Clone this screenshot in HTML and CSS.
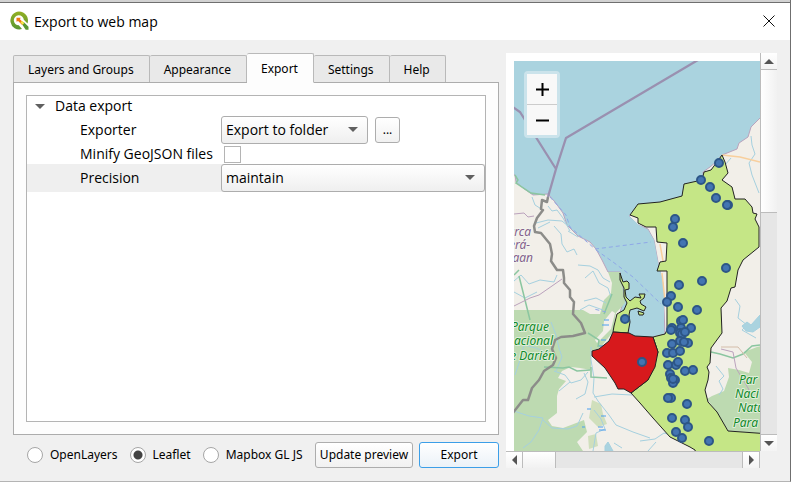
FILE: index.html
```html
<!DOCTYPE html>
<html lang="en">
<head>
<meta charset="utf-8">
<title>Export to web map</title>
<meta name="viewport" content="width=device-width, initial-scale=1">
<link rel="stylesheet" href="styles.css">
</head>
<body>
<div class="window">
  <header class="titlebar">
    <svg class="logo" viewBox="0 0 20 20" aria-hidden="true">
      <defs><linearGradient id="q" x1="0" y1="0" x2="0" y2="1"><stop offset="0" stop-color="#93b023"/><stop offset="1" stop-color="#589632"/></linearGradient></defs>
      <path d="M10 0.500a9 9 0 1 0 3 17.600l-3.200-3.800a5 5 0 1 1 5-5.500l3.700 3.600A9 9 0 0 0 10 .5z" fill="url(#q)"/>
      <path d="M11.500 11h3.200l4.800 4.800v3h-2.800z" fill="#589632"/>
      <path d="M7.500 6.800h4.200l-.8 1.400 4 3.900-1.800 1.800-4-4-1.600.9z" fill="#ee7913"/>
      <path d="M11.400 11.400l1.700-1.700 2.200 2.200-1.600 1.800z" fill="#f0e64a"/>
    </svg>
    <h1>Export to web map</h1>
    <button class="close" type="button" aria-label="Close"><svg viewBox="0 0 12 12"><path d="M.5 .5l11 11M11.500 .5l-11 11" stroke="#111" fill="none"/></svg></button>
  </header>
  <main class="body">
    <section class="options">
      <div class="tabs" role="tablist">
        <button type="button" role="tab">Layers and Groups</button>
        <button type="button" role="tab">Appearance</button>
        <button type="button" role="tab" class="active" aria-selected="true">Export</button>
        <button type="button" role="tab">Settings</button>
        <button type="button" role="tab">Help</button>
      </div>
      <div class="pane">
        <div class="tree">
          <div class="row group"><span class="twisty"></span><span>Data export</span></div>
          <div class="row tall">
            <label for="exporter">Exporter</label>
            <span class="combo fit"><select id="exporter"><option>Export to folder</option></select></span>
            <button class="btn browse" type="button">...</button>
          </div>
          <div class="row">
            <label for="minify">Minify GeoJSON files</label>
            <input id="minify" class="check" type="checkbox">
          </div>
          <div class="row tall selected">
            <label for="precision">Precision</label>
            <span class="combo"><select id="precision"><option>maintain</option></select></span>
          </div>
        </div>
      </div>
      <div class="footer">
        <label><input type="radio" name="lib">OpenLayers</label>
        <label><input type="radio" name="lib" checked>Leaflet</label>
        <label><input type="radio" name="lib">Mapbox GL JS</label>
        <button class="btn update" type="button">Update preview</button>
        <button class="btn export" type="button">Export</button>
      </div>
    </section>
    <section class="preview">
      <div class="map">
        <svg class="mapart" viewBox="514 61 246 390" preserveAspectRatio="xMinYMin slice">
          <path fill="#aad3df" d="M0 0h900v600H0z"/>
          <g fill="#f2efe9" stroke="#b9a3bd">
            <path d="M510 174L515 175L516 182L523 188L533 195L548 194L555 202L563 213L567 225L578 236L590 242L596 249L602 260L608 272L620 272L624 300L614 330L635 338L665 334L663 285L658 262L654 240L648 229L638 225L629 216L640 208L684 198L704 181L703 172L710 167L717 161L722 155L737 149L739 143L748 137L751 127L760 118L770 115V460H510z" />
          </g>
          <path fill="#aad3df" d="M622 273L627 302L630 333L650 337L664 334V285L658 262L654 240L648 230L639 225L629 216L610 220L600 250z"/>
          <g fill="#bddab1">
            <path d="M510 310H583L590 314L600 314L604 300L611 293L612 283L608 272H620L625 303L616 313L613 332L600 348L591 351V370L580 368L571 367L562 371L558 378L566 381L559 389L557 396V413L548 420L552 426L563 428L571 425L584 420L587 432L577 442L583 451H510z"/>
            <path d="M592 400L601 404L603 414L607 424L598 427L589 418zM588 436L596 434L598 446L589 449z" fill="#d0dfbc"/>
            <path d="M770 344L757 347L744 352L752 362L749 373L739 370L728 368L729 377L724 391L712 396L707 399L717 413L728 431L770 434z"/>
          </g>
          <path d="M604 321l8-10 3 2-4 16-14 14-2-3 8-9z" fill="#f2efe9"/>
          <g class="rivers">
            <path d="M532 197l3 8 8 5M548 206l4 5 5-1 6 8 7 13M536 223l12-3 14 1 6 5M538 228l12-6M554 226l7 8 1 10 5 8 7-3 3 6M568 231l10 6M578 265l12 1 8 4 5 8 7 4M585 278l8-7 6 12 9 5 3 9M584 301l12-3 10 5M580 310l9-5 14 5M514 281l7-6 8 9 11-4 14 2 3-7M514 292l11 6 12-6M515 375l4-12 5-18 12 3 15 7M551 322l5 13 3 13 3 9-6 14"/>
            <path d="M591 347v13l3 18-1 15 5 8 11 14 7 10 17 7 17 6M594 397l18-3 20 1M554 371l11 4 6 8 10-3 7-8M559 391l11-9M584 373l4 9-3 12-9 5M514 411l15 5 14 2-4 12-8 12-8 6M543 420l9 8 16 1 9-3 6-13M594 410l7 9 4 10-9 4-3 18M614 443l8 5M640 441l15-2 9-6 10 3M648 451l8-9M719 395l4-6-4-8 5-5-8-10M751 136l1 9 3 9-6 9 3 12 7 18M731 158l-6 7M735 299l5 7-2 12 9 7-5 5 14 8"/>
            <path d="M742 326l5-4 4 3 9-10v12l-7 5-7-1z" fill="#aad3df"/>
            <path d="M605 446l3-4 5 9h-8z" fill="#aad3df"/>
          </g>
          <g fill="none" stroke="#4b9ef0"><path d="M604 320h5M602 325h7M601 340h5M599 346h7M587 409h4M601 416h5M598 427h5M582 427h3M599 430h7"/></g>
          <g fill="none" stroke="#8bc6a0" stroke-width="1.500">
            <path d="M515 175l3 5-2 3 15 10 14 2M519 276l11 44M514 275l5-5M544 367l19 1 6-1 8 4 13-1M604 314l8-20M591 367v10l16 1M588 333l11 7-1 7M711 352l9 2 13 4 10-4 9-8 8-1"/>
          </g>
          <g fill="none" stroke="#bba2bd">
            <path d="M514 214l10-1 4 4 6-1M562 279l-10 7-13 9-9 3-16 8M721 349l12 3 3 16 12 20 5 10"/>
            <path d="M721 347h17l9 11" stroke="#d4bda9"/>
          </g>
          <path d="M722 155l18 2 20 5M657 228l2 14M660 244l3 17M662 273l3 28" stroke="#f8cf9d" fill="none" stroke-width="1.500"/>
          <path d="M550 197l16 18 4 12 25 22 56-7M596 250l17 12 20 15 28 27M606 312l-12-3" stroke="#8fa8e8" stroke-dasharray="4 3" fill="none" stroke-width="1"/>
          <path d="M510 105L520 112L556 169M698 60L566 138L556 169L548 197" stroke="#9a90b0" fill="none" stroke-width="2.300"/>
          <path d="M548 197l-1 5-5-2-1 9 2 1-6 8-3 8 1 6 6 1 9 11 2 10-1 7 6 9 6 0 1 8 0 5 6 7 0 7 4 5-1 12 8 9 4 10-12 3-12 1-6 3-3 9 4 9-3 7-9 6-5 9-7 8-4 12h-5l-11 14" stroke="#8c8c89" fill="none" stroke-width="2.500" stroke-linejoin="round"/>
          <g class="area">
            <path class="lime" d="M722 155L725 162L728 173L722 180L732 187L735 199L745 199L752 207L753 213L757 214L755 219L759 227V247L743 260L738 270L735 287L731 288L727 301L721 308L722 333L711 348L710 363L707 367L709 372L708 380L705 390L708 402L717 412L728 431L770 434V460H698L695 450L690 447L670 437L653 418L640 403L631 393L648 380L658 352L653 337L665 334L667 330V271H657L660 262L666 261L667 243L657 242L656 227H646L638 223V218L630 215L638 204L660 202L682 196L684 184L702 180L704 172L711 170L717 162z"/>
            <path class="lime" d="M613 332L614 326L617 314L624 310L627 303L624 297V288L620 280V273L623 282L627 281L629 283L629 289L625 290L626 297L630 301L635 297L641 298L639 294L645 294L644 298L640 301L641 304L646 307L644 311L637 308L630 310L629 315L630 322L628 333z"/>
            <path class="lime" d="M638 311l6 2-1 2h-4z"/>
            <path class="red" d="M613 332L629 333L635 336L653 337L658 352L655 367L648 380L631 393L624 389L618 389L615 383L605 368L592 356V351L599 349L609 341z"/>
          </g>
          <g class="dots"></g>
          <g class="place admin" text-anchor="end"><text x="531" y="236">arca</text><text x="530" y="249">erá-</text><text x="533" y="262">aan</text></g>
          <g class="place park" text-anchor="end"><text x="549" y="331">Parque</text><text x="553" y="345">acional</text><text x="555" y="360">e Darién</text></g>
          <g class="place park"><text x="739" y="384">Par</text><text x="735" y="398">Naci</text><text x="738" y="412">Natu</text><text x="733" y="427">Para</text></g>
        </svg>
        <div class="zoom"><button type="button" aria-label="Zoom in"><svg viewBox="0 0 13 13"><path d="M6.500 0v13M0 6.500h13" stroke="#000" stroke-width="2"/></svg></button><button type="button" aria-label="Zoom out"><svg viewBox="0 0 13 13"><path d="M0 6.500h13" stroke="#000" stroke-width="2"/></svg></button></div>
      </div>
      <div class="vbar"><span class="step up"></span><span class="thumb"></span><span class="track"></span><span class="step down"></span></div>
      <div class="hbar"><span class="step left"></span><span class="thumb"></span><span class="track"></span><span class="step right"></span></div>
    </section>
  </main>
</div>
<script src="map.js"></script>
</body>
</html>
```
FILE: map.js
```js
const points = [
  [719,163],[701,180],[710,187],[716,198],[728,205],[727,205],[675,219],[673,227],[683,243],[726,268],
  [702,281],[679,285],[671,296],[667,302],[678,307],[697,310],[681,321],[683,320],[691,328],[672,328],
  [671,330],[681,328],[680,333],[682,334],[685,332],[672,344],[680,341],[688,343],[684,342],[667,353],
  [673,353],[680,351],[668,365],[676,365],[678,362],[685,371],[693,370],[670,374],[671,378],[675,380],
  [673,383],[673,379],[671,398],[668,398],[687,404],[672,418],[685,420],[688,427],[676,432],[682,438],
  [709,441],[642,362],[625,319]
];
const layer = document.querySelector('.dots');
for (const [x, y] of points) {
  const dot = document.createElementNS('http://www.w3.org/2000/svg', 'circle');
  dot.setAttribute('cx', x);
  dot.setAttribute('cy', y);
  dot.setAttribute('r', 4);
  layer.append(dot);
}
```
FILE: styles.css
```css
* { box-sizing: border-box; }
body {
  margin: 0;
  font: 12px/16px "Noto Sans", sans-serif;
  color: #000;
}
button, select, input { font: inherit; color: inherit; margin: 0; }
.window {
  display: flex;
  flex-direction: column;
  min-height: 100vh;
  background: #f0f0f0;
  border: solid #6f6f6f;
  border-width: 0 1px 0 0;
  border-bottom: 1px solid #b4b4b4;
}
.titlebar {
  display: flex;
  align-items: center;
  height: 40px;
  padding: 0 15px 0 9px;
  background: #fff;
  border-top: 2px solid #d2d2d2;
  box-shadow: inset 0 1px #6f6f6f;
}
.logo { width: 20px; height: 20px; }
h1 { flex: 1; margin: 2px 0 0 5px; font: 14px/20px "Open Sans", sans-serif; }
.close { display: flex; padding: 0; border: 0; background: none; }
.close svg { width: 12px; height: 12px; }
.body {
  flex: 1;
  display: grid;
  grid-template-columns: 486fr 271fr;
  gap: 7px;
  padding: 13px;
}
.options { display: flex; flex-direction: column; min-width: 0; }
.tabs { display: flex; align-items: flex-end; height: 30px; }
.tabs button {
  height: 28px;
  padding: 2px 15px 0 14px;
  border: 1px solid #b9b9b9;
  border-left-width: 0;
  border-bottom-color: #acacac;
  border-radius: 2px 2px 0 0;
  background: #e9e9e9;
  white-space: nowrap;
}
.tabs button:first-child { border-left-width: 1px; }
.tabs .active { height: 30px; background: #fdfdfd; border-bottom-color: #fdfdfd; z-index: 1; }
.pane {
  flex: 1;
  display: flex;
  margin-top: -1px;
  padding: 12px;
  border: 1px solid #acacac;
  background: #fdfdfd;
}
.tree {
  flex: 1;
  border: 1px solid #b4b4b4;
  background: #fff;
  font: 14px/20px "Open Sans", sans-serif;
}
.row { display: flex; align-items: center; height: 20px; }
.tall { height: 28px; }
.selected { background: #efefef; }
.group { padding-left: 8px; }
.twisty {
  width: 10px;
  margin-right: 10px;
  border: solid transparent;
  border-width: 5px 5px 0;
  border-top-color: #606060;
}
.row label { width: 194px; padding-left: 53px; white-space: nowrap; }
.combo { position: relative; flex: 1; display: flex; }
.combo.fit { flex: 0 0 147px; }
.combo select {
  appearance: none;
  width: 100%;
  height: 28px;
  padding: 0 4px;
  border: 1px solid #adadad;
  border-radius: 3px;
  background: linear-gradient(#fff, #efefef);
}
.combo::after {
  content: "";
  position: absolute;
  right: 10px;
  top: 11px;
  border: solid transparent;
  border-width: 5px 5px 0;
  border-top-color: #606060;
  pointer-events: none;
}
.btn {
  height: 26px;
  padding: 0;
  border: 1px solid #adadad;
  border-radius: 3px;
  background: linear-gradient(#fff, #f1f1f1);
  font: 12px/16px "Noto Sans", sans-serif;
  white-space: nowrap;
}
.browse { width: 25px; margin-left: 7px; }
.check {
  appearance: none;
  width: 17px;
  height: 17px;
  margin-left: 3px;
  border: 1px solid #b4b4b4;
  background: #fff;
}
.footer { display: flex; align-items: center; height: 26px; margin-top: 7px; padding-left: 14px; }
.footer label { display: flex; align-items: center; gap: 7px; margin-right: 12px; white-space: nowrap; }
.footer input {
  appearance: none;
  width: 16px;
  height: 16px;
  border: 1px solid #a6a6a6;
  border-radius: 50%;
  background: #fff;
}
.footer input:checked { background: radial-gradient(circle, #444 4px, #fff 5px); }
.update { width: 98px; margin-left: auto; }
.export { width: 80px; margin-left: 6px; border-color: #3c9fe8; background: linear-gradient(#fff, #ebf2f8); }
.preview {
  display: grid;
  grid-template: 1fr 17px / 1fr 17px;
  min-width: 0;
}
.map { position: relative; margin: 0; border: solid #fff; border-width: 8px 0 0 8px; overflow: hidden; }
.mapart { position: absolute; width: 100%; height: 100%; }
.rivers path { stroke: #a5d0df; stroke-width: 1; }
.rivers { fill: none; }
.area path { stroke: #222; stroke-width: 1; stroke-linejoin: round; }
.lime { fill: #c5e686; }
.red { fill: #d7191c; }
.dots circle { fill: #4375b2; stroke: #2d5687; stroke-width: 2; }
.place { font: italic 12px "Noto Sans", sans-serif; paint-order: stroke; stroke: #f4f5ee; stroke-width: 2px; stroke-linejoin: round; }
.admin { fill: #84608c; }
.park { fill: #108a2a; stroke: #e0eed9; }
.zoom {
  position: absolute;
  left: 10px;
  top: 10px;
  display: grid;
  border: 3px solid #cbe3eb;
  border-radius: 4px;
}
.zoom button { display: grid; place-items: center; width: 30px; height: 30px; padding: 0; border: 0; background: #f8f8f8; }
.zoom button:first-child { height: 31px; border-bottom: 1px solid #ccc; }
.zoom svg { width: 13px; height: 13px; }
.vbar, .hbar { display: flex; background: #e6e6e6; }
.vbar { flex-direction: column; border-left: 1px solid #bcbcbc; }
.hbar { border-top: 1px solid #bcbcbc; border-right: 1px solid #bcbcbc; }
.track { flex: 1; }
.step { display: grid; place-items: center; flex: 0 0 17px; background: linear-gradient(#fff, #f4f4f4); }
.step::after { content: ""; border: 5px solid transparent; }
.up { border-bottom: 1px solid #bcbcbc; }
.up::after { border-top: 0; border-bottom-color: #555; }
.down { border-top: 1px solid #bcbcbc; }
.down::after { border-bottom: 0; border-top-color: #555; }
.left { border-right: 1px solid #bcbcbc; }
.left::after { border-left: 0; border-right-color: #555; }
.right { border-left: 1px solid #bcbcbc; }
.right::after { border-right: 0; border-left-color: #555; }
.vbar .thumb { flex: 0 0 36%; border-bottom: 1px solid #bcbcbc; background: linear-gradient(90deg, #fff, #f1f1f1); }
.hbar .thumb { flex: 0 0 33px; border-right: 1px solid #bcbcbc; background: linear-gradient(#fff, #f1f1f1); }
```
